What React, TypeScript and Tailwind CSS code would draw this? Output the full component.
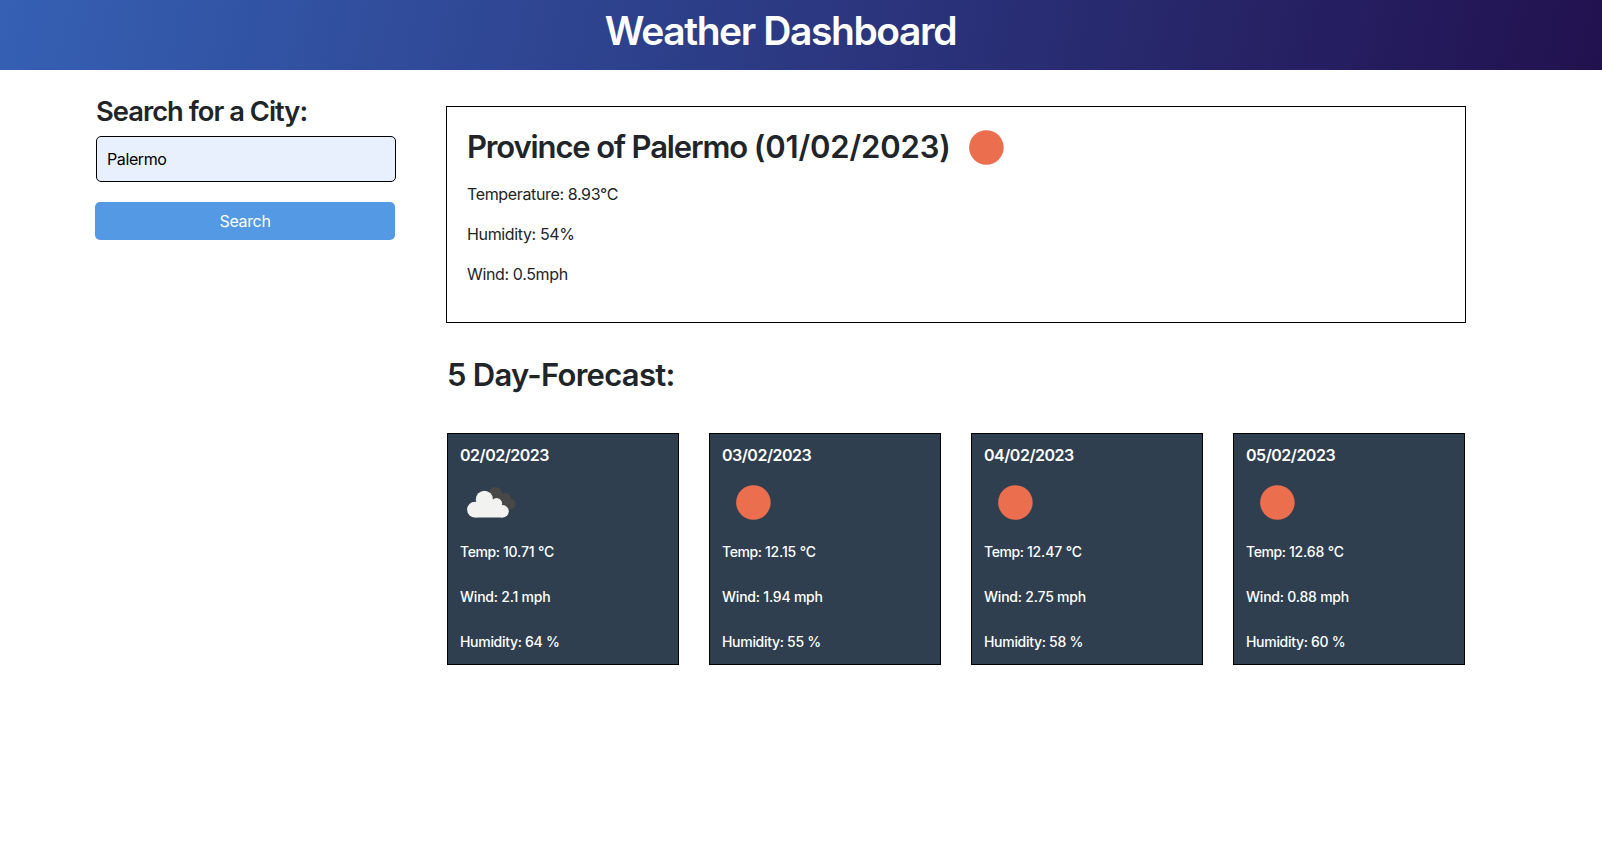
type Condition = 'clear' | 'clouds';

interface Day {
  date: string;
  condition: Condition;
  temp: string;
  wind: string;
  humidity: string;
}

const forecast: Day[] = [
  { date: '02/02/2023', condition: 'clouds', temp: '10.71', wind: '2.1', humidity: '64' },
  { date: '03/02/2023', condition: 'clear', temp: '12.15', wind: '1.94', humidity: '55' },
  { date: '04/02/2023', condition: 'clear', temp: '12.47', wind: '2.75', humidity: '58' },
  { date: '05/02/2023', condition: 'clear', temp: '12.68', wind: '0.88', humidity: '60' },
];

function WeatherIcon({ condition }: { condition: Condition }) {
  if (condition === 'clear') {
    return (
      <svg className="block size-[72px] shrink-0" viewBox="0 0 72 72">
        <circle cx="36.4" cy="35.5" r="17.3" fill="#eb6e4f" />
      </svg>
    );
  }
  return (
    <svg className="block size-[72px] shrink-0" viewBox="0 0 72 72">
      <g fill="#484848">
        <circle cx="40.2" cy="26.9" r="6.9" />
        <circle cx="50.4" cy="31" r="5" />
        <circle cx="55.6" cy="37.1" r="5.1" />
        <path d="M38 26 L50 27 L55.6 42.2 H46 Z" />
      </g>
      <g fill="#f2f2f0">
        <circle cx="20" cy="42.6" r="7.9" />
        <circle cx="29.4" cy="32.4" r="8.6" />
        <circle cx="41.6" cy="36.6" r="5.5" />
        <circle cx="47.6" cy="44.3" r="6.2" />
        <path d="M20 50.5 V37 L29 32 L41 36 L48 42 V50.5 Z" />
      </g>
    </svg>
  );
}

function DayCard({ day }: { day: Day }) {
  return (
    <article className="flex size-[232px] flex-col border border-black bg-[#2f3f4f] pt-[12px] pl-[12px] text-white">
      <h3 className="h-[19px] text-[16px] leading-[19px] font-semibold tracking-[-0.48px]">{day.date}</h3>
      <div className="-ml-[5px] flex h-[76px] items-center">
        <WeatherIcon condition={day.condition} />
      </div>
      <div className="flex flex-col gap-[24px] text-[14px] leading-[21px] font-medium">
        <p className="tracking-[-0.15px]">
          <span className="tracking-[-0.4px]">Temp: </span>
          {day.temp} °C
        </p>
        <p className="tracking-[-0.22px]">Wind: {day.wind} mph</p>
        <p className="tracking-[-0.3px]">Humidity: {day.humidity} %</p>
      </div>
    </article>
  );
}

export default function App() {
  return (
    <div className="min-h-screen bg-white font-['Inter',sans-serif] text-[16px] text-[#212529]">
      <header className="flex h-[70px] justify-center bg-[linear-gradient(102deg,#3560b4,#22114f)] pt-[7px] pr-[41px]">
        <h1 className="text-[39px] leading-[48px] font-semibold tracking-[-1.42px] text-white">Weather Dashboard</h1>
      </header>
      <main className="flex pl-[95px]">
        <aside className="flex w-[301px] shrink-0 flex-col pt-[25px]">
          <h2 className="pl-px text-[27.3px] leading-[34px] font-semibold tracking-[-0.97px]">Search for a City:</h2>
          <input
            className="mt-[7px] ml-px h-[46px] w-[300px] rounded-[5px] border border-black bg-[#e8f0fe] px-[10px] tracking-[-0.4px] text-black outline-none"
            defaultValue="Palermo"
            aria-label="City"
          />
          <button className="mt-[20px] h-[38px] w-[300px] rounded-[5px] bg-[#5499e3] tracking-[-0.35px] text-white">
            Search
          </button>
        </aside>
        <div className="ml-[50px] flex w-[1020px] flex-col pt-[36px]">
          <section className="h-[217px] border border-black pt-[4px] pl-[20px]">
            <div className="flex h-[71px] items-center">
              <h2 className="w-[483px] text-[31px] leading-[38px] font-semibold tracking-[-1.13px] whitespace-nowrap">
                Province of Palermo <span className="tracking-[-0.14px]">(01/02/2023)</span>
              </h2>
              <div className="pt-[2px]">
                <WeatherIcon condition="clear" />
              </div>
            </div>
            <div className="flex flex-col gap-[16px] leading-[24px] tracking-[-0.36px]">
              <p>Temperature: 8.93°C</p>
              <p>Humidity: 54%</p>
              <p>Wind: 0.5mph</p>
            </div>
          </section>
          <h2 className="mt-[33px] ml-[1px] text-[31px] leading-[38px] font-semibold tracking-[-0.73px]">
            5 Day-Forecast:
          </h2>
          <section className="mt-[39px] ml-px flex gap-[30px]">
            {forecast.map((day) => (
              <DayCard key={day.date} day={day} />
            ))}
          </section>
        </div>
      </main>
    </div>
  );
}
